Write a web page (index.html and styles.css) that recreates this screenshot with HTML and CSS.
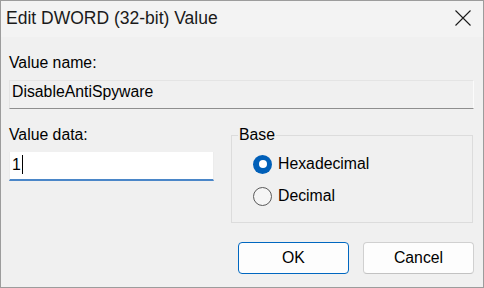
FILE: index.html
```html
<!DOCTYPE html>
<html lang="en">
<head>
<meta charset="UTF-8">
<title>Edit DWORD (32-bit) Value</title>
<link rel="stylesheet" href="styles.css">
</head>
<body>
<div class="window">
    <div class="titlebar">
        <span class="title">Edit DWORD (32-bit) Value</span>
        <svg class="close" width="16" height="16" viewBox="0 0 16 16">
            <path d="M0.5 0.5 L15.5 15.5 M15.5 0.5 L0.5 15.5" stroke="#1a1a1a" stroke-width="1.1" fill="none"/>
        </svg>
    </div>
    <div class="content">
        <div class="label">Value name:</div>
        <div class="field readonly">DisableAntiSpyware</div>
        <div class="row">
            <div class="col">
                <div class="label">Value data:</div>
                <div class="field input">1<span class="caret"></span></div>
            </div>
            <fieldset class="group">
                <legend>Base</legend>
                <div class="radio checked"><span class="dot"></span>Hexadecimal</div>
                <div class="radio"><span class="dot"></span>Decimal</div>
            </fieldset>
        </div>
        <div class="buttons">
            <div class="btn primary">OK</div>
            <div class="btn">Cancel</div>
        </div>
    </div>
</div>
</body>
</html>
```

FILE: styles.css
```css
html, body {
    margin: 0;
    padding: 0;
}
body {
    font-family: 'Liberation Sans', Arial, sans-serif;
    font-size: 15.8px;
    line-height: 18px;
    color: #000;
    background: #f0f0f0;
}
.window {
    width: 484px;
    height: 288px;
    box-sizing: border-box;
    border: 1px solid #9c9c9c;
    background: #f0f0f0;
    overflow: hidden;
}
.titlebar {
    height: 36px;
    background: #f3f3f3;
    display: flex;
    align-items: center;
    justify-content: space-between;
    padding: 0 12px 0 5px;
}
.title {
    font-size: 17.5px;
    color: #1a1a1a;
    margin-top: -2px;
}
.close {
    margin-top: -2px;
}
.content {
    padding: 17px 9px 0 8px;
}
.field {
    height: 29px;
    box-sizing: border-box;
    padding: 2px 0 0 2px;
}
.label + .field {
    margin-top: 8px;
}
.readonly {
    border: 1px solid #e4e4e4;
    border-right-color: #fbfbfb;
    border-bottom-color: #8e8e8e;
    background: #f0f0f0;
}
.input {
    background: #fff;
    border: 1px solid #ececec;
    border-bottom: 2px solid #4a86c8;
    border-top: 0;
    padding-top: 4px;
    display: flex;
    align-items: flex-start;
}
.caret {
    display: inline-block;
    width: 1px;
    height: 19px;
    background: #000;
    margin-left: 1px;
    margin-top: -1px;
}
.row {
    display: grid;
    grid-template-columns: 205px 242px;
    gap: 17px;
    margin-top: 17px;
}
.group {
    margin: 0;
    padding: 4px 0 0 6px;
    border: 1px solid #dcdcdc;
    height: 97px;
    box-sizing: border-box;
}
.group legend {
    padding: 0 1px;
}
.radio {
    display: flex;
    align-items: center;
    height: 32px;
    padding-left: 15px;
}
.dot {
    width: 19px;
    height: 19px;
    box-sizing: border-box;
    border-radius: 50%;
    border: 1px solid #5a5a5a;
    background: #f5f5f5;
    margin-right: 6px;
    display: flex;
    align-items: center;
    justify-content: center;
}
.checked .dot {
    border: 0;
    background: #005fb8;
}
.checked .dot::after {
    content: "";
    width: 8px;
    height: 8px;
    border-radius: 50%;
    background: #fff;
}
.buttons {
    display: flex;
    justify-content: flex-end;
    gap: 14px;
    margin-top: 19px;
}
.btn {
    width: 111px;
    height: 32px;
    box-sizing: border-box;
    border: 1px solid #d0d0d0;
    border-bottom-color: #c2c2c2;
    border-radius: 4px;
    background: #fdfdfd;
    display: flex;
    align-items: center;
    justify-content: center;
}
.btn.primary {
    border-color: #0067c0;
}
```
